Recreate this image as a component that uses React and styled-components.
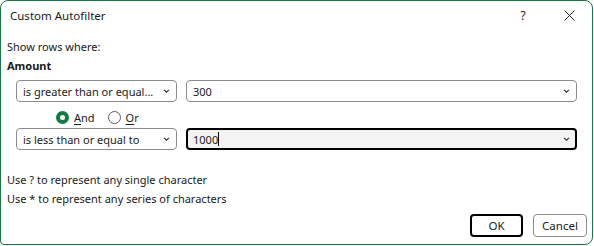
import React from "react";
import styled, { createGlobalStyle } from "styled-components";

const GlobalStyle = createGlobalStyle`
  html, body {
    margin: 0;
    padding: 0;
    background: #ffffff;
  }
  body {
    font-family: "Noto Sans", "Open Sans", sans-serif;
    font-size: 11px;
    color: #1a1a1a;
  }
`;

const Dialog = styled.div`
  box-sizing: border-box;
  width: 593px;
  height: 245px;
  border: 1px solid #1b7a45;
  border-radius: 8px 8px 8px 4px;
  background: #ffffff;
  display: flex;
  flex-direction: column;
`;

const TitleBar = styled.div`
  height: 28px;
  display: flex;
  align-items: center;
  padding-left: 9px;
`;

const Title = styled.div`
  flex: 1;
  font-size: 11.5px;
`;

const TitleButton = styled.div`
  width: ${p => p.w}px;
  display: flex;
  justify-content: center;
  align-items: center;
  font-size: 12px;
`;

const Body = styled.div`
  flex: 1;
  display: flex;
  flex-direction: column;
  padding: 10px 5px 7px 6px;
`;

const Line = styled.div`
  line-height: ${p => p.lh || 16}px;
  height: ${p => p.lh || 16}px;
  font-weight: ${p => (p.bold ? 700 : 400)};
  margin-top: ${p => p.mt || 0}px;
  white-space: nowrap;
`;

const ConditionRow = styled.div`
  display: flex;
  gap: 9px;
  margin-top: ${p => p.mt}px;
  padding-left: 9px;
`;

const Combo = styled.div`
  box-sizing: border-box;
  width: ${p => p.w}px;
  height: 22px;
  border: ${p => (p.focused ? "2px solid #000000" : "1px solid #8c8c8c")};
  border-radius: 4px;
  background: ${p => (p.focused ? "#f3f3f3" : "#ffffff")};
  display: flex;
  align-items: center;
  padding: 0 ${p => (p.focused ? 5 : 6)}px;
`;

const ComboText = styled.div`
  flex: 1;
  white-space: nowrap;
  overflow: hidden;
  display: flex;
  align-items: center;
`;

const Caret = styled.span`
  display: inline-block;
  width: 1px;
  height: 14px;
  background: #000000;
`;

const RadioGroup = styled.div`
  display: flex;
  align-items: center;
  height: 16px;
  margin-top: 7px;
  padding-left: 49px;
  gap: 13px;
`;

const RadioOption = styled.label`
  display: flex;
  align-items: center;
  gap: 5px;
`;

const RadioDot = styled.span`
  box-sizing: border-box;
  width: 13px;
  height: 13px;
  border-radius: 50%;
  border: ${p => (p.checked ? "4px solid #107c41" : "1px solid #5c5c5c")};
  background: #ffffff;
`;

const Key = styled.span`
  text-decoration: underline;
  text-underline-offset: 2px;
`;

const ButtonRow = styled.div`
  margin-top: auto;
  display: flex;
  justify-content: flex-end;
  gap: 10px;
`;

const Button = styled.div`
  box-sizing: border-box;
  width: ${p => p.w}px;
  height: 23px;
  border: ${p => (p.primary ? "2px solid #000000" : "1px solid #8c8c8c")};
  border-radius: 4px;
  display: flex;
  align-items: center;
  justify-content: center;
  font-size: 11.5px;
`;

const Chevron = () => (
  <svg width="7" height="4" viewBox="0 0 7 4">
    <path d="M1 0.8 L3.5 3.2 L6 0.8" fill="none" stroke="#333" strokeWidth="1.1" />
  </svg>
);

const CloseIcon = () => (
  <svg width="11" height="11" viewBox="0 0 11 11">
    <path d="M0.5 0.5 L10.5 10.5 M10.5 0.5 L0.5 10.5" stroke="#222" strokeWidth="1" />
  </svg>
);

export default function App() {
  return (
    <>
      <GlobalStyle />
      <Dialog>
        <TitleBar>
          <Title>Custom Autofilter</Title>
          <TitleButton w={46}>?</TitleButton>
          <TitleButton w={46}>
            <CloseIcon />
          </TitleButton>
        </TitleBar>
        <Body>
          <Line>Show rows where:</Line>
          <Line bold mt={3}>Amount</Line>
          <ConditionRow mt={6}>
            <Combo w={161}>
              <ComboText>is greater than or equal...</ComboText>
              <Chevron />
            </Combo>
            <Combo w={391}>
              <ComboText>300</ComboText>
              <Chevron />
            </Combo>
          </ConditionRow>
          <RadioGroup>
            <RadioOption>
              <RadioDot checked />
              <span><Key>A</Key>nd</span>
            </RadioOption>
            <RadioOption>
              <RadioDot />
              <span><Key>O</Key>r</span>
            </RadioOption>
          </RadioGroup>
          <ConditionRow mt={3}>
            <Combo w={161}>
              <ComboText>is less than or equal to</ComboText>
              <Chevron />
            </Combo>
            <Combo w={391} focused>
              <ComboText>1000<Caret /></ComboText>
              <Chevron />
            </Combo>
          </ConditionRow>
          <Line lh={19} mt={20}>Use ? to represent any single character</Line>
          <Line lh={19}>Use * to represent any series of characters</Line>
          <ButtonRow>
            <Button w={53} primary>OK</Button>
            <Button w={54}>Cancel</Button>
          </ButtonRow>
        </Body>
      </Dialog>
    </>
  );
}
